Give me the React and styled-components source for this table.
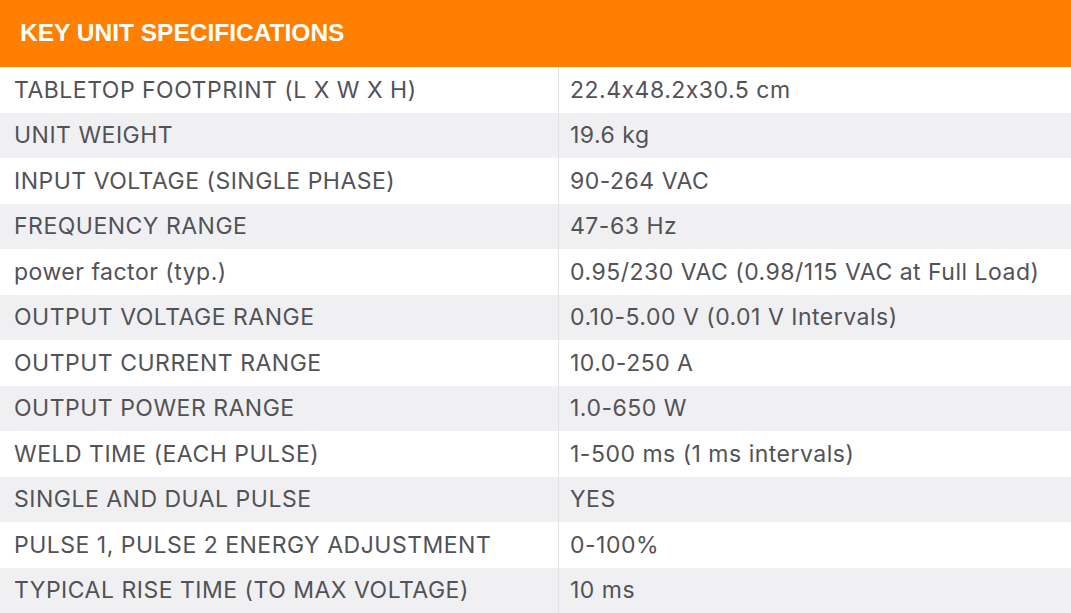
import React from "react";
import styled, { createGlobalStyle } from "styled-components";

const GlobalStyle = createGlobalStyle`
  body {
    margin: 0;
    background: #ffffff;
    font-family: 'Inter', 'Liberation Sans', sans-serif;
  }
`;

const Table = styled.div`
  width: 1071px;
  display: flex;
  flex-direction: column;
`;

const Header = styled.div`
  height: 67px;
  background: #ff8000;
  color: #ffffff;
  display: flex;
  align-items: center;
  padding: 0 0 1px 20px;
  font-family: 'Liberation Sans', Arial, sans-serif;
  font-size: 24.5px;
  font-weight: 700;
  box-sizing: border-box;
`;

const Row = styled.div`
  display: grid;
  grid-template-columns: 558px 1fr;
  height: 45.5px;
  background: ${(p) => (p.$shaded ? "#f0f0f2" : "#ffffff")};
`;

const Cell = styled.div`
  display: flex;
  align-items: center;
  padding-left: ${(p) => (p.$value ? "11px" : "14px")};
  border-left: ${(p) => (p.$value ? "1px solid #e2e2e4" : "none")};
  color: #525257;
  font-size: 23px;
  white-space: nowrap;
  letter-spacing: 0.5px;
`;

const specs = [
  ["TABLETOP FOOTPRINT (L X W X H)", "22.4x48.2x30.5 cm"],
  ["UNIT WEIGHT", "19.6 kg"],
  ["INPUT VOLTAGE (SINGLE PHASE)", "90-264 VAC"],
  ["FREQUENCY RANGE", "47-63 Hz"],
  ["power factor (typ.)", "0.95/230 VAC (0.98/115 VAC at Full Load)"],
  ["OUTPUT VOLTAGE RANGE", "0.10-5.00 V (0.01 V Intervals)"],
  ["OUTPUT CURRENT RANGE", "10.0-250 A"],
  ["OUTPUT POWER RANGE", "1.0-650 W"],
  ["WELD TIME (EACH PULSE)", "1-500 ms (1 ms intervals)"],
  ["SINGLE AND DUAL PULSE", "YES"],
  ["PULSE 1, PULSE 2 ENERGY ADJUSTMENT", "0-100%"],
  ["TYPICAL RISE TIME (TO MAX VOLTAGE)", "10 ms"],
];

export default function App() {
  return (
    <>
      <GlobalStyle />
      <Table>
        <Header>KEY UNIT SPECIFICATIONS</Header>
        {specs.map(([label, value], i) => (
          <Row key={label} $shaded={i % 2 === 1}>
            <Cell>{label}</Cell>
            <Cell $value>{value}</Cell>
          </Row>
        ))}
      </Table>
    </>
  );
}
